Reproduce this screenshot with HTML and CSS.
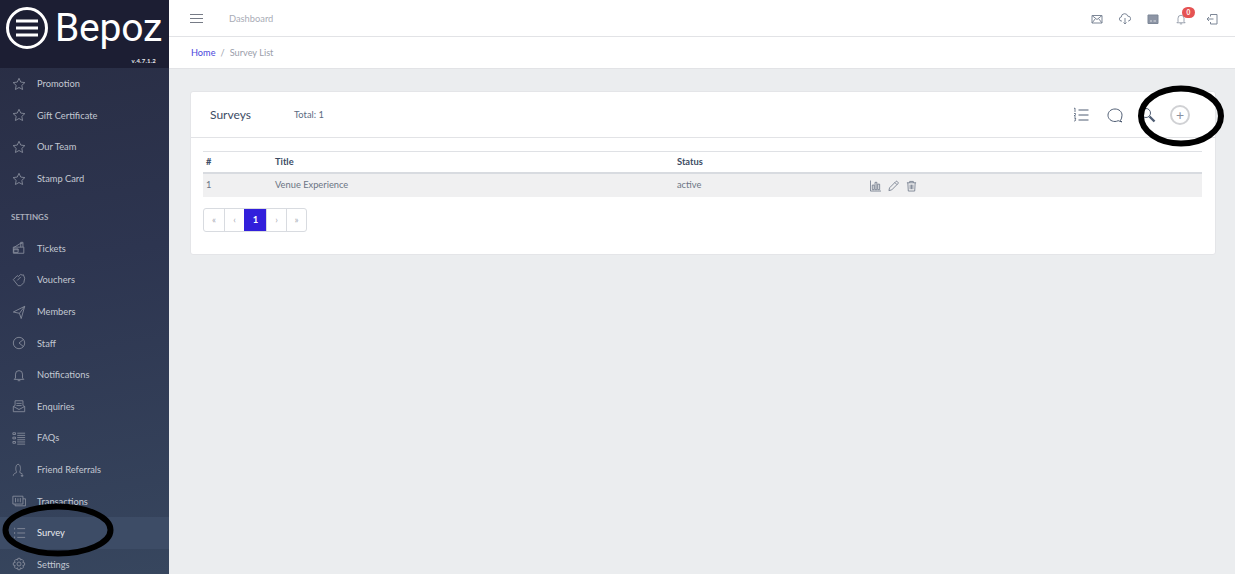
FILE: index.html
```html
<!DOCTYPE html>
<html lang="en">
<head>
<meta charset="utf-8">
<title>Bepoz Survey List</title>
<link rel="stylesheet" href="styles.css">
</head>
<body>
<svg class="sprite" aria-hidden="true">
  <symbol id="star" viewBox="0 0 16 16"><path d="M8 1.500l2 4.300 4.700.6-3.500 3.200.9 4.700L8 12l-4.100 2.300.9-4.700L1.300 6.400 6 5.800z"/></symbol>
  <symbol id="ticket" viewBox="0 0 16 16"><path d="M1.500 7h12v7h-12zM2 7.500l8-5 2 .5M10 7V1.500h2.500V7M1.500 10h6M2 9h5v4H2z"/></symbol>
  <symbol id="voucher" viewBox="0 0 16 16"><path d="M1.500 7.500L6 3l1.500 1L10 1.500l1.500 1L13 2l1.500 4-1 5-3.500 3.500H7L1.500 7.500zM6 8.500l4-4"/></symbol>
  <symbol id="send" viewBox="0 0 16 16"><path d="M14.500 1.500L1.500 8l7 1.500 2 6z M14.500 1.500L8.500 9.500"/></symbol>
  <symbol id="clock" viewBox="0 0 16 16"><circle cx="8" cy="8" r="6.500"/><path d="M13 4L8 8l5 4"/></symbol>
  <symbol id="bell" viewBox="0 0 16 16"><path d="M4 11.500V7a4 4 0 0 1 8 0v4.500l1.500 1.500h-11zM6.500 14.500h3"/></symbol>
  <symbol id="inbox" viewBox="0 0 16 16"><path d="M1.500 8.500v6h13v-6l-2-1V2h-9v5.500zM1.500 8.500L8 12l6.500-3.500M5 5h6M5 7.500h6"/></symbol>
  <symbol id="faq" viewBox="0 0 16 16"><path d="M1 2h3v2H1zM1 7h3v2H1zM1 12h3v2H1zM6 2.500h9M6 5h9M6 7.500h9M6 10h9M6 12.500h9M6 15h9"/></symbol>
  <symbol id="user" viewBox="0 0 16 16"><path d="M5 9.500C3.800 8 4 1.500 7 1.500S10.200 8 9 9.500V11l3 1.500M1.500 14.500c0-2 1.500-2.500 3.500-3.500V9.500M11.500 13v3M10 14.500h3"/></symbol>
  <symbol id="cash" viewBox="0 0 16 16"><path d="M1 2.500h11.500v9H1zM3.500 11.500v2h12v-8h-3M6.800 5v4M4 4.500v5M9.500 4.500v5"/></symbol>
  <symbol id="listlines" viewBox="0 0 16 16"><path d="M6 3h9M6 8h9M6 13h9M3 2v2M3 7v2M3 12v2"/></symbol>
  <symbol id="gear" viewBox="0 0 16 16"><circle cx="8" cy="8" r="2.300"/><path d="M6.700 1.500h2.600l.4 2 1.700-.9 1.900 1.900-1 1.700 2.100.5v2.600l-2.100.5 1 1.700-1.900 1.900-1.700-1-.4 2.100H6.700l-.4-2.100-1.700 1-1.900-1.900 1-1.700-2.200-.5V6.700l2.200-.5-1-1.700 1.900-1.900 1.700.9z"/></symbol>
</svg>

<aside class="sidebar">
  <div class="brand">
    <div class="brand-row">
      <svg class="brand-mark" viewBox="0 0 44 44"><circle cx="22" cy="22" r="19.500"/><path d="M11 15h22M11 22h22M11 29h22"/></svg>
      <span class="brand-name">Bepoz</span>
    </div>
    <span class="brand-version">v.4.7.1.2</span>
  </div>
  <nav class="nav">
    <a class="nav-item"><svg class="nav-icon"><use href="#star"/></svg>Promotion</a>
    <a class="nav-item"><svg class="nav-icon"><use href="#star"/></svg>Gift Certificate</a>
    <a class="nav-item"><svg class="nav-icon"><use href="#star"/></svg>Our Team</a>
    <a class="nav-item"><svg class="nav-icon"><use href="#star"/></svg>Stamp Card</a>
    <div class="nav-title">SETTINGS</div>
    <a class="nav-item"><svg class="nav-icon"><use href="#ticket"/></svg>Tickets</a>
    <a class="nav-item"><svg class="nav-icon"><use href="#voucher"/></svg>Vouchers</a>
    <a class="nav-item"><svg class="nav-icon"><use href="#send"/></svg>Members</a>
    <a class="nav-item"><svg class="nav-icon"><use href="#clock"/></svg>Staff</a>
    <a class="nav-item"><svg class="nav-icon"><use href="#bell"/></svg>Notifications</a>
    <a class="nav-item"><svg class="nav-icon"><use href="#inbox"/></svg>Enquiries</a>
    <a class="nav-item"><svg class="nav-icon"><use href="#faq"/></svg>FAQs</a>
    <a class="nav-item"><svg class="nav-icon"><use href="#user"/></svg>Friend Referrals</a>
    <a class="nav-item"><svg class="nav-icon"><use href="#cash"/></svg>Transactions</a>
    <a class="nav-item active"><svg class="nav-icon"><use href="#listlines"/></svg>Survey</a>
    <a class="nav-item"><svg class="nav-icon"><use href="#gear"/></svg>Settings</a>
  </nav>
</aside>

<div class="main">
  <header class="topbar">
    <div class="topbar-left">
      <svg class="burger" viewBox="0 0 13 9"><path d="M0 .5h13M0 4.500h13M0 8.500h13"/></svg>
      <span class="top-link">Dashboard</span>
    </div>
    <div class="topbar-right">
      <svg class="top-icon" viewBox="0 0 12 12"><path d="M1 2.500h10v7.500H1zM1 2.500l5 4 5-4M1 10l3.500-4.500M11 10L7.500 5.500"/></svg>
      <svg class="top-icon" viewBox="0 0 12 12"><path d="M3 8H2.500a2 2 0 0 1-.2-4A3.300 3.300 0 0 1 8.800 3.200 2.400 2.400 0 0 1 9.500 8H9M6 5v6M4.500 9.500L6 11l1.500-1.500"/></svg>
      <svg class="top-icon filled" viewBox="0 0 12 12"><path d="M1 2h10v8.500H1z"/><path class="cut" d="M3 8h2M6.500 8h2.500"/></svg>
      <span class="bell-wrap">
        <svg class="top-icon" viewBox="0 0 16 16"><use href="#bell"/></svg>
        <span class="bell-badge">0</span>
      </span>
      <svg class="top-icon top-exit" viewBox="0 0 12 12"><path d="M4.500 3.500V1.500h6.500v9.500H4.500V9M7.500 6H1M3 4L1 6l2 2"/></svg>
    </div>
  </header>
  <div class="crumbs">
    <a class="crumb-link">Home</a><span class="crumb-sep">/</span><span class="crumb-current">Survey List</span>
  </div>
  <div class="content">
    <section class="card">
      <div class="card-head">
        <h2 class="card-title">Surveys</h2>
        <span class="card-total">Total: 1</span>
        <div class="card-tools">
          <svg class="tool" viewBox="0 0 16 16"><path d="M5.500 3h10M5.500 8h10M5.500 13h10"/><path class="thin" d="M1 1.500l1-.5v4M1 6.500h1.500v1L1 9h2M1 11h2l-1 1.300c1 0 1.200 1.700-1 1.700"/></svg>
          <svg class="tool tool-chat" viewBox="0 0 16 16"><path d="M13.500 13.500l1.500 1.500-3.800-1.300C10 14.200 9 14.500 8 14.500 4 14.500 1 11.700 1 8.200S4 2 8 2s7 2.700 7 6.200c0 2-.6 4-1.500 5.300z"/></svg>
          <svg class="tool tool-search" viewBox="0 0 16 16"><circle cx="6" cy="6" r="4.500"/><path d="M9.500 9.500l5 5" stroke-width="2.400"/></svg>
          <span class="tool-add">+</span>
        </div>
      </div>
      <div class="card-body">
        <table class="table">
          <thead>
            <tr><th class="col-num">#</th><th class="col-title">Title</th><th class="col-status">Status</th><th></th></tr>
          </thead>
          <tbody>
            <tr>
              <td>1</td><td>Venue Experience</td><td>active</td>
              <td class="actions">
                <svg class="act" viewBox="0 0 12 12"><path d="M.5 0v11.500H12M2.500 10V5h2v5zM5.500 10V2h2v8zM8.500 10V4h2v6z"/></svg>
                <svg class="act" viewBox="0 0 12 12"><path d="M1 11l.7-3L8.500 1.200a1.200 1.200 0 0 1 1.700 0l.6.6a1.200 1.200 0 0 1 0 1.700L4 10.300zM7.500 2.200l2.300 2.300"/></svg>
                <svg class="act" viewBox="0 0 12 12"><path d="M1 2.500h10M4 2.500V1h4v1.500M2 2.500l.5 9h7l.5-9M4.500 4.500v5M6 4.500v5M7.500 4.500v5"/></svg>
              </td>
            </tr>
          </tbody>
        </table>
        <div class="pager">
          <span class="page">«</span><span class="page">‹</span><span class="page current">1</span><span class="page">›</span><span class="page">»</span>
        </div>
      </div>
    </section>
  </div>
</div>

<svg class="mark mark-survey" viewBox="0 0 112 54"><ellipse cx="56" cy="27" rx="52.500" ry="23.500"/></svg>
<svg class="mark mark-add" viewBox="0 0 88 64"><ellipse cx="44" cy="32" rx="40" ry="27.500"/></svg>
</body>
</html>
```
FILE: styles.css
```css
* { box-sizing: border-box; }
html, body { height: 100%; }
body {
  margin: 0;
  display: flex;
  overflow: hidden;
  position: relative;
  background: #ebedef;
  color: #4f5d73;
  font-family: Lato, "Open Sans", sans-serif;
  font-size: 10px;
}
.sprite { display: none; }

/* sidebar */
.sidebar {
  width: 169px;
  flex: none;
  height: 574px;
  overflow: hidden;
  color: #c3c8d2;
  background: linear-gradient(170deg, #282c42 0%, #2d3550 45%, #37465e 100%);
}
.brand {
  height: 68px;
  background: #1c1e33;
  padding: 6px 10px 0 5px;
  display: flex;
  flex-direction: column;
}
.brand-row { display: flex; align-items: center; gap: 6px; height: 44px; }
.brand-mark { width: 44px; height: 44px; flex: none; fill: none; stroke: #fff; stroke-width: 3; }
.brand-name { font-family: Roboto, sans-serif; font-weight: 400; font-size: 39px; line-height: 44px; color: #fff; letter-spacing: -.2px; }
.brand-version { align-self: flex-end; margin: 7px 3px 0 0; font-size: 6px; font-weight: 700; color: #e6e7eb; letter-spacing: .2px; }
.nav-item {
  height: 31.6px;
  display: flex;
  align-items: center;
  padding-left: 12px;
  font-size: 9.300px;
}
.nav-item.active { background: #3d4c66; color: #e8ebf0; }
.nav-icon {
  width: 14px;
  height: 14px;
  margin-right: 11px;
  flex: none;
  fill: none;
  stroke: #878d9c;
  stroke-width: 1;
}
.nav-title {
  height: 38.200px;
  padding: 18px 0 0 11px;
  font-size: 8px;
  font-weight: 700;
  color: #a9aebb;
}

/* top */
.main { flex: 1; min-width: 0; display: flex; flex-direction: column; }
.topbar {
  height: 37px;
  background: #fff;
  border-bottom: 1px solid #e2e3e6;
  display: flex;
  align-items: center;
  justify-content: space-between;
  padding: 0 17px 0 21px;
}
.topbar-left { display: flex; align-items: center; gap: 26px; }
.burger { width: 13px; height: 9px; fill: none; stroke: #767b86; stroke-width: 1; }
.top-link { font-size: 9.300px; color: #a9acb6; }
.topbar-right { display: flex; align-items: center; gap: 16px; padding-top: 2px; }
.top-icon { width: 12px; height: 12px; fill: none; stroke: #7d8797; stroke-width: 1; display: block; }
.top-icon.filled { fill: #8d95a5; }
.top-icon .cut { stroke: #d9dce1; }
.top-exit { margin-left: 3px; }
.bell-wrap { position: relative; display: block; }
.bell-badge {
  position: absolute;
  top: -6px;
  left: 7px;
  width: 13px;
  height: 11px;
  border-radius: 6px;
  background: #e55353;
  color: #fff;
  font-size: 6.500px;
  font-weight: 700;
  line-height: 11px;
  text-align: center;
}
.crumbs {
  height: 32px;
  background: #fff;
  border-bottom: 1px solid #e2e3e6;
  display: flex;
  align-items: center;
  padding-left: 22px;
  font-size: 9.200px;
}
.crumb-link { color: #4a45dc; }
.crumb-sep { margin: 0 5px; color: #9aa0aa; }
.crumb-current { color: #9a9eaa; }

/* content */
.content { flex: 1; padding: 22px 19px 0 21px; }
.card {
  height: 164px;
  background: #fff;
  border: 1px solid #e4e5e8;
  border-radius: 3px;
}
.card-head {
  height: 46px;
  border-bottom: 1px solid #e2e3e6;
  display: flex;
  align-items: center;
  padding: 0 25px 0 19px;
}
.card-title { margin: 0; width: 84px; font-size: 12px; font-weight: 400; color: #3c4b64; }
.card-total { font-size: 9.300px; color: #5a6a82; }
.card-tools { margin-left: auto; display: flex; align-items: center; gap: 17px; }
.tool { width: 16px; height: 16px; fill: none; stroke: #4f5d73; stroke-width: 1; }
.tool .thin { stroke-width: .8; }
.tool-chat { margin-left: 1px; }
.tool-search { margin-left: 0; }
.tool-add {
  width: 20px;
  height: 20px;
  margin-left: -3px;
  border: 2px solid #d0d1d4;
  border-radius: 50%;
  color: #8a92a0;
  font-size: 14px;
  line-height: 15px;
  text-align: center;
}
.card-body { padding: 13px 13px 0 12px; }
.table { width: 100%; border-collapse: collapse; table-layout: fixed; font-size: 9.300px; }
.table th {
  height: 21px;
  padding: 0 3px;
  text-align: left;
  font-weight: 700;
  color: #3c4b64;
  border-top: 1px solid #dfe1e5;
  border-bottom: 2px solid #d8dbe0;
}
.table td { height: 23px; padding: 0 3px 2px; background: #f0f0f1; color: #6b7484; }
.col-num { width: 69px; }
.col-title { width: 402px; }
.col-status { width: 193px; }
.actions { display: flex; align-items: center; gap: 7px; }
.table td.actions { padding: 2px 3px 0; }
.act { width: 11px; height: 12px; fill: none; stroke: #6f7889; stroke-width: .9; }
.pager {
  display: inline-flex;
  margin-top: 11px;
  height: 24px;
  border: 1px solid #d8dbe0;
  border-radius: 3px;
  overflow: hidden;
}
.page {
  width: 20px;
  display: flex;
  align-items: center;
  justify-content: center;
  border-left: 1px solid #d8dbe0;
  color: #a8acb5;
  font-size: 9.500px;
}
.page:first-child { border-left: 0; }
.page.current { width: 22px; background: #321fdb; border-color: #321fdb; color: #fff; font-weight: 700; }

/* hand-drawn annotations lying over the screenshot */
.mark { position: absolute; fill: none; stroke: #000; stroke-width: 6; pointer-events: none; }
.mark-survey { left: 2px; top: 503px; width: 112px; height: 54px; }
.mark-add { left: 1137px; top: 84px; width: 88px; height: 64px; }
```
